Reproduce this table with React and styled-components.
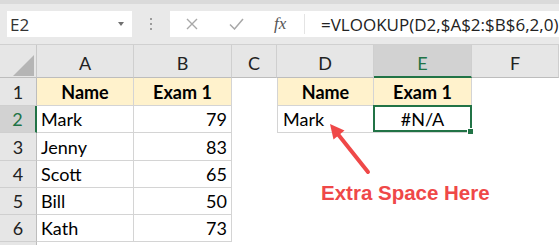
import React from 'react';
import styled, { createGlobalStyle, css } from 'styled-components';

const green = '#217346';
const line = '#d4d4d4';

const GlobalStyle = createGlobalStyle`
  html, body {
    margin: 0;
    padding: 0;
    background: #fff;
  }
  body {
    font-family: Lato, "Open Sans", sans-serif;
    color: #000;
  }
`;

const columns = ['A', 'B', 'C', 'D', 'E', 'F'];

const scores = [
  ['Mark', 79],
  ['Jenny', 83],
  ['Scott', 65],
  ['Bill', 50],
  ['Kath', 73],
];

const App = () => (
  <Window>
    <GlobalStyle />
    <FormulaBar>
      <NameBox>
        E2
        <Caret />
      </NameBox>
      <Grip>
        <i />
        <i />
        <i />
      </Grip>
      <InputBox>
        <Tool>
          <svg width="12" height="12" viewBox="0 0 12 12">
            <path d="M1 1 L11 11 M11 1 L1 11" stroke="#a8a8a8" strokeWidth="1.4" fill="none" />
          </svg>
        </Tool>
        <Tool>
          <svg width="15" height="12" viewBox="0 0 15 12">
            <path d="M1 6.5 L5.5 11 L14 1" stroke="#a8a8a8" strokeWidth="1.5" fill="none" />
          </svg>
        </Tool>
        <Fx>fx</Fx>
        <Formula>=VLOOKUP(D2,$A$2:$B$6,2,0)</Formula>
      </InputBox>
    </FormulaBar>

    <Sheet>
      <Corner />
      {columns.map(col => (
        <ColHead key={col} $active={col === 'E'}>{col}</ColHead>
      ))}

      {/* row 1: headers of both tables */}
      <RowHead>1</RowHead>
      <Cell $lined $head $align="center">Name</Cell>
      <Cell $lined $head $align="center">Exam 1</Cell>
      <Cell />
      <Cell $lined $head $edge $align="center">Name</Cell>
      <Cell $lined $head $align="center">Exam 1</Cell>
      <Cell />

      {scores.map(([name, score], i) => (
        <React.Fragment key={name}>
          <RowHead $active={i === 0}>{i + 2}</RowHead>
          <Cell $lined>{name}</Cell>
          <Cell $lined $align="flex-end">{score}</Cell>
          <Cell />
          {i === 0 ? (
            <>
              <Cell $lined $edge $pad={5}>Mark</Cell>
              <Cell $lined $align="center" $selected>#N/A</Cell>
            </>
          ) : (
            <>
              <Cell />
              <Cell />
            </>
          )}
          <Cell />
        </React.Fragment>
      ))}

      {/* row 7 only peeks in at the bottom edge */}
      <RowHead />

      <Callout>
        <svg width="559" height="245" viewBox="0 0 559 245">
          <line x1="368" y1="172" x2="337" y2="133" stroke="#ef4848" strokeWidth="4" strokeLinecap="round" />
          <polygon points="330,124 344.5,130.5 333.5,139.5" fill="#ef4848" />
        </svg>
        <Label>Extra Space Here</Label>
      </Callout>
    </Sheet>
  </Window>
);

const Window = styled.div`
  width: 559px;
  height: 245px;
  overflow: hidden;
  position: relative;
`;

const FormulaBar = styled.div`
  height: 45px;
  box-sizing: border-box;
  border-top: 4px solid #dadada;
  border-bottom: 1px solid #d0d0d0;
  background: #e9e9e9;
  display: flex;
  align-items: center;
  padding: 0 0 0 7px;
  & > * {
    flex-shrink: 0;
  }
`;

const NameBox = styled.div`
  width: 125px;
  height: 26px;
  box-sizing: border-box;
  background: #fff;
  display: flex;
  align-items: center;
  justify-content: space-between;
  padding: 0 8px 0 3px;
  font-family: "Open Sans", sans-serif;
  font-size: 17px;
  color: #333;
`;

const Caret = styled.span`
  width: 0;
  height: 0;
  border-left: 3.5px solid transparent;
  border-right: 3.5px solid transparent;
  border-top: 4px solid #707070;
`;

const Grip = styled.div`
  width: 38px;
  display: flex;
  flex-direction: column;
  align-items: center;
  gap: 3px;
  i {
    display: block;
    width: 2px;
    height: 2px;
    background: #9c9c9c;
  }
`;

const InputBox = styled.div`
  flex: 1 0 0;
  min-width: 0;
  height: 26px;
  background: #fff;
  display: flex;
  align-items: center;
  overflow: hidden;
  & > * {
    flex-shrink: 0;
  }
`;

const Tool = styled.div`
  width: 44px;
  display: flex;
  justify-content: center;
`;

const Fx = styled.span`
  margin-left: 16px;
  width: 30px;
  font-family: "Liberation Serif", serif;
  font-style: italic;
  font-size: 17px;
  color: #555;
  border-right: 1px solid #e4e4e4;
`;

const Formula = styled.span`
  margin-left: 16px;
  font-family: "Open Sans", sans-serif;
  font-size: 17px;
  color: #222;
  white-space: nowrap;
`;

const Sheet = styled.div`
  display: grid;
  grid-template-columns: 37px 97px 98px 45px 97px 98px 1fr;
  grid-template-rows: 33px 28px 27px 28px 27px 27px 27px 27px;
  font-size: 18px;
`;

const Corner = styled.div`
  background: #e6e6e6;
  border-right: 1px solid #c8c8c8;
  border-bottom: 1px solid #bdbdbd;
  position: relative;
  &::after {
    content: '';
    position: absolute;
    right: 2px;
    bottom: 1px;
    border-left: 21px solid transparent;
    border-bottom: 21px solid #b5b5b5;
  }
`;

const ColHead = styled.div`
  background: ${p => (p.$active ? '#d2d2d2' : '#e6e6e6')};
  color: ${p => (p.$active ? green : '#222')};
  border-right: 1px solid #cfcfcf;
  border-bottom: ${p => (p.$active ? `2px solid ${green}` : '1px solid #bdbdbd')};
  display: flex;
  align-items: center;
  justify-content: center;
  padding-top: 4px;
`;

const RowHead = styled.div`
  grid-column: 1;
  background: ${p => (p.$active ? '#d2d2d2' : '#e6e6e6')};
  color: ${p => (p.$active ? green : '#222')};
  border-bottom: 1px solid #cfcfcf;
  border-right: ${p => (p.$active ? `2px solid ${green}` : '1px solid #bdbdbd')};
  display: flex;
  align-items: center;
  justify-content: center;
`;

const Cell = styled.div`
  display: flex;
  align-items: center;
  justify-content: ${p => p.$align || 'flex-start'};
  padding: 0 ${p => p.$pad || 4}px;
  white-space: nowrap;
  position: relative;
  ${p => p.$lined && css`
    border-right: 1px solid ${line};
    border-bottom: 1px solid ${line};
  `}
  ${p => p.$edge && css`
    border-left: 1px solid ${line};
  `}
  ${p => p.$head && css`
    background: #fff2cc;
    font-weight: 700;
  `}
  ${p => p.$selected && css`
    &::before {
      content: '';
      position: absolute;
      inset: -1px -1px 0 -1px;
      border: 2px solid ${green};
    }
    &::after {
      content: '';
      position: absolute;
      right: -3px;
      bottom: -3px;
      width: 5px;
      height: 5px;
      background: ${green};
      border: 1px solid #fff;
    }
  `}
`;

const Callout = styled.div`
  position: absolute;
  inset: 0;
  pointer-events: none;
  svg {
    position: absolute;
    left: 0;
    top: 0;
  }
`;

const Label = styled.div`
  position: absolute;
  left: 321px;
  top: 181px;
  font-family: "Liberation Sans", Arial, sans-serif;
  font-weight: 700;
  font-size: 20.5px;
  color: #ef4848;
  white-space: nowrap;
`;

export default App;
